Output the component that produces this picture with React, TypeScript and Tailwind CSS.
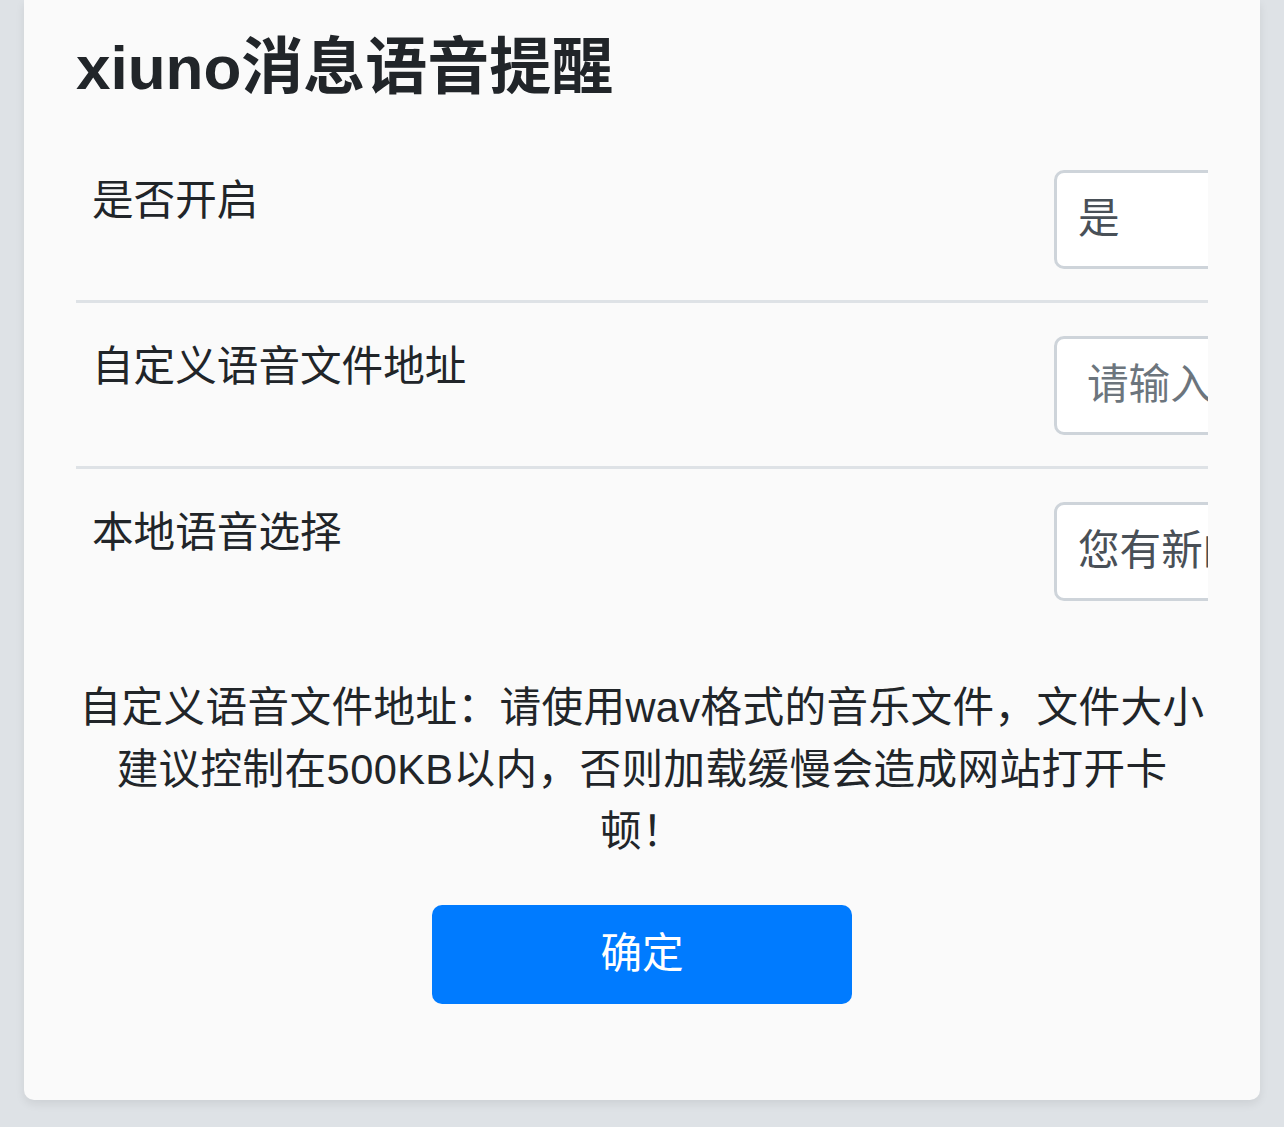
const font = { fontFamily: '"Liberation Sans", "Noto Sans CJK SC", sans-serif' }

function Row({ label, children, divider = true }: { label: string; children: React.ReactNode; divider?: boolean }) {
  return (
    <div className={'flex overflow-hidden pt-[33px] pb-[31px] ' + (divider ? 'border-b-[3px] border-[#dee2e6]' : '')}>
      <div className="w-[978px] shrink-0 pl-[16px] text-[41.6px] leading-[62px] text-[#212529]">{label}</div>
      {children}
    </div>
  )
}

function Box({ text, placeholder }: { text?: string; placeholder?: string }) {
  return (
    <div className="h-[99px] w-[400px] shrink-0 rounded-[10px] border-[3px] border-[#ced4da] bg-white flex items-center whitespace-nowrap overflow-hidden">
      {text ? (
        <span className="pl-[21px] text-[41.6px] text-[#495057]">{text}</span>
      ) : (
        <span className="pl-[30px] text-[41.6px] text-[#6c757d]">{placeholder}</span>
      )}
    </div>
  )
}

export default function App() {
  return (
    <div className="min-h-screen bg-[#dee2e6] pb-[27px]" style={font}>
      <div className="mx-[24px] rounded-b-[10px] bg-[#fafafa] px-[52px] pt-[31px] pb-[96px] shadow-[0_4px_10px_rgba(0,0,0,0.08)]">
        <h3 className="text-[62px] leading-[74px] font-semibold text-[#212529]">xiuno消息语音提醒</h3>
        <div className="mt-[32px]">
          <Row label="是否开启">
            <Box text="是" />
          </Row>
          <Row label="自定义语音文件地址">
            <Box placeholder="请输入语音文件地址" />
          </Row>
          <Row label="本地语音选择" divider={false}>
            <Box text="您有新的消息" />
          </Row>
        </div>
        <p className="mt-[45px] text-center text-[41.6px] leading-[62px] tracking-[0.4px] text-[#212529]">
          自定义语音文件地址：请使用wav格式的音乐文件，文件大小
          <br />
          建议控制在500KB以内，否则加载缓慢会造成网站打开卡
          <br />
          顿！
        </p>
        <div className="mt-[42px] flex justify-center">
          <button className="h-[99px] w-[420px] rounded-[10px] bg-[#007bff] text-[41.6px] text-white">确定</button>
        </div>
      </div>
    </div>
  )
}
